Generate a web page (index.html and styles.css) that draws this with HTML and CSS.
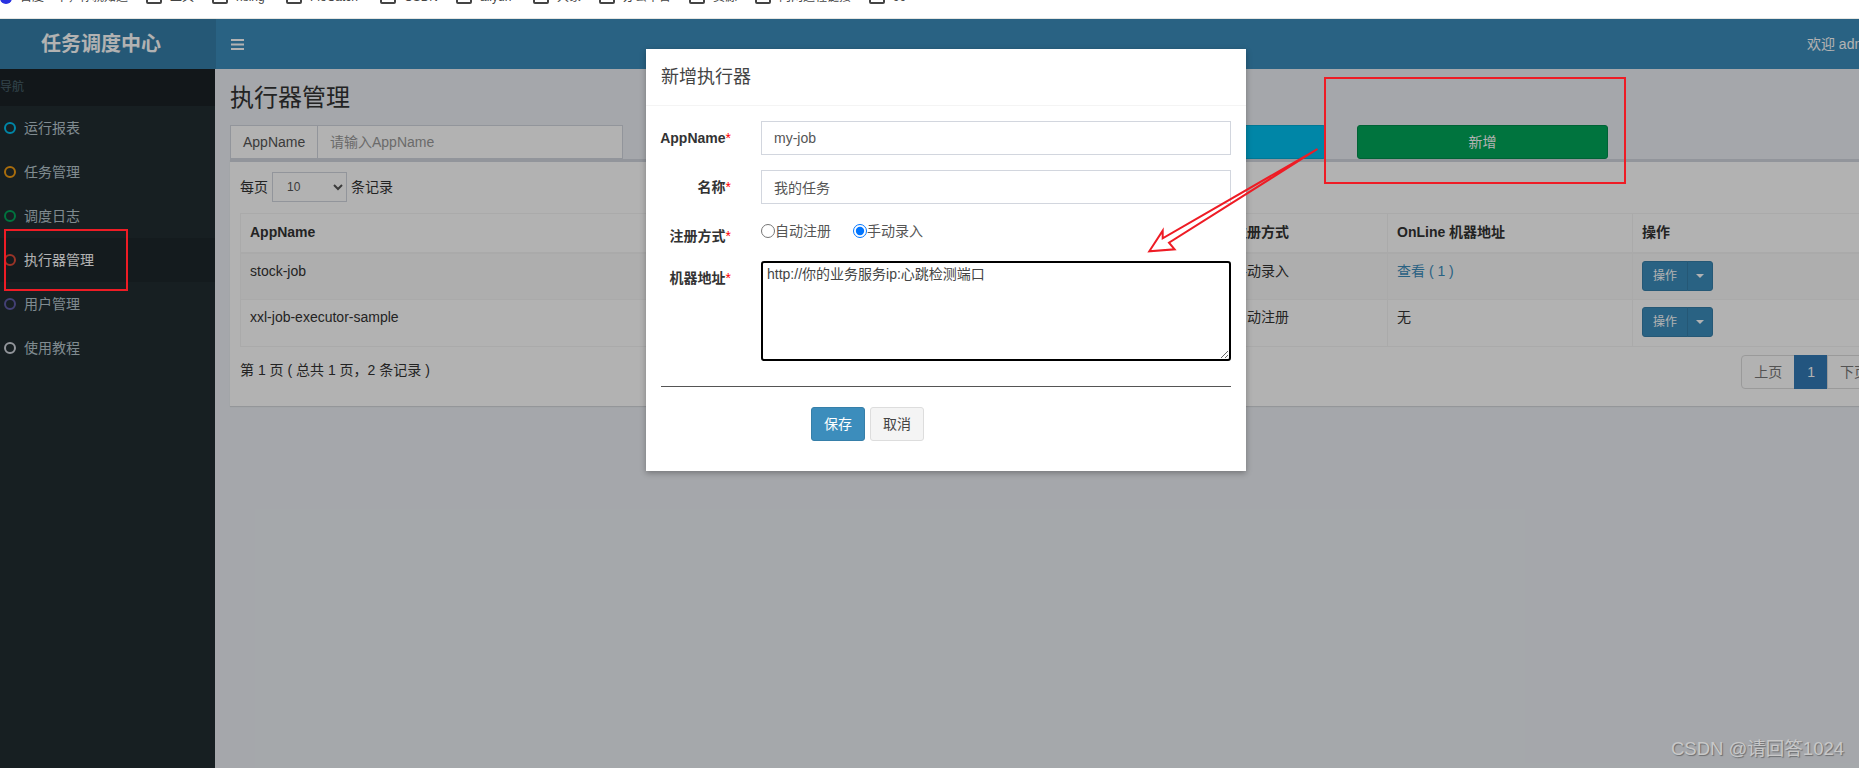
FILE: index.html
```html
<!DOCTYPE html>
<html lang="zh-CN">
<head>
  <meta charset="UTF-8" />
  <title>任务调度中心</title>
  <link rel="stylesheet" href="styles.css">
</head>
<body>
  <div class="bookmarks">
    <span class="bm"><i class="bm-baidu"></i>百度一下，你就知道</span>
    <span class="bm"><i class="bm-folder"></i>工具</span>
    <span class="bm"><i class="bm-folder"></i>rising</span>
    <span class="bm"><i class="bm-folder"></i>FioCatch</span>
    <span class="bm"><i class="bm-folder"></i>CSDN</span>
    <span class="bm"><i class="bm-folder"></i>aliyun</span>
    <span class="bm"><i class="bm-folder"></i>大象</span>
    <span class="bm"><i class="bm-folder"></i>办公平台</span>
    <span class="bm"><i class="bm-folder"></i>资源</span>
    <span class="bm"><i class="bm-folder"></i>内网远程链接</span>
    <span class="bm"><i class="bm-folder"></i>99</span>
  </div>

  <div class="app">
    <header class="topbar">
      <div class="logo">任务调度中心</div>
      <div class="navbar">
        <svg class="bars" width="13" height="11" viewBox="0 0 13 11"><path d="M0 0h13v2H0zM0 4.5h13v2H0zM0 9h13v2H0z" fill="#fff"/></svg>
        <span class="welcome">欢迎 admin</span>
      </div>
    </header>

    <div class="main">
      <aside class="sidebar">
        <div class="nav-head">导航</div>
        <ul class="menu">
          <li><i class="dot dot-aqua"></i>运行报表</li>
          <li><i class="dot dot-yellow"></i>任务管理</li>
          <li><i class="dot dot-green"></i>调度日志</li>
          <li class="active"><i class="dot dot-red"></i>执行器管理</li>
          <li><i class="dot dot-purple"></i>用户管理</li>
          <li><i class="dot dot-gray"></i>使用教程</li>
        </ul>
      </aside>

      <section class="content">
        <h1>执行器管理</h1>
        <div class="filters">
          <div class="input-group">
            <span class="addon">AppName</span>
            <input type="text" placeholder="请输入AppName" />
          </div>
          <button class="btn-wide btn-info">搜索</button>
          <button class="btn-wide btn-success">新增</button>
        </div>

        <div class="box">
          <div class="length">每页
            <select><option>10</option><option>25</option><option>50</option></select>
            条记录
          </div>
          <table>
            <colgroup>
              <col class="c-app"><col class="c-name"><col class="c-type"><col class="c-online"><col class="c-op">
            </colgroup>
            <thead>
              <tr><th>AppName</th><th>名称</th><th>注册方式</th><th>OnLine 机器地址</th><th>操作</th></tr>
            </thead>
            <tbody>
              <tr class="odd">
                <td>stock-job</td><td>股票任务</td><td>手动录入</td><td><a href="#">查看 ( 1 )</a></td>
                <td><span class="split"><b>操作</b><b class="caret-part"><i class="caret"></i></b></span></td>
              </tr>
              <tr>
                <td>xxl-job-executor-sample</td><td>示例执行器</td><td>自动注册</td><td>无</td>
                <td><span class="split"><b>操作</b><b class="caret-part"><i class="caret"></i></b></span></td>
              </tr>
            </tbody>
          </table>
          <div class="table-foot">
            <span>第 1 页 ( 总共 1 页，2 条记录 )</span>
            <div class="pager"><a>上页</a><a class="on">1</a><a>下页</a></div>
          </div>
        </div>
      </section>
    </div>
  </div>

  <div class="backdrop"></div>

  <div class="modal">
    <div class="modal-head">新增执行器</div>
    <form class="modal-body">
      <label>AppName<em>*</em></label>
      <input type="text" value="my-job" />
      <label>名称<em>*</em></label>
      <input type="text" value="我的任务" />
      <label>注册方式<em>*</em></label>
      <div class="radios">
        <span class="radio"><input type="radio" name="addressType" />自动注册</span>
        <span class="radio"><input type="radio" name="addressType" checked />手动录入</span>
      </div>
      <label>机器地址<em>*</em></label>
      <textarea>http://你的业务服务ip:心跳检测端口</textarea>
      <hr />
      <div class="actions">
        <button type="button" class="btn-save">保存</button>
        <button type="button" class="btn-cancel">取消</button>
      </div>
    </form>
  </div>

  <!-- annotations drawn on top of the screenshot -->
  <div class="mark mark-menu"></div>
  <div class="mark mark-add"></div>
  <svg class="arrow" width="1859" height="768" viewBox="0 0 1859 768">
    <path d="M1317.5 149 L1162.7 238.3 L1162.7 230.7 L1149.3 251.3 L1174.6 249.3 L1169 242.7 Z" fill="none" stroke="#ee1c25" stroke-width="2" />
  </svg>
  <div class="watermark">CSDN @请回答1024</div>
</body>
</html>
```

FILE: styles.css
```css
* { box-sizing: border-box; margin: 0; padding: 0; }
html, body { height: 100%; overflow: hidden; }
body { background: #ecf0f5; color: #333; font-family: "Liberation Sans", "Noto Sans CJK SC", sans-serif; font-size: 14px; line-height: 20px; position: relative; }

/* browser bookmarks bar, cut off at the top of the shot */
.bookmarks { display: grid; grid-template-columns: 146px 66px 74px 94px 76px 77px 66px 90px 66px 114px auto; height: 19px; background: #fff; border-bottom: 1px solid #e6e6e2; overflow: hidden; font-size: 12px; color: #444; }
.bm { display: flex; gap: 8px; height: 16px; margin-top: -11px; line-height: 16px; white-space: nowrap; }
.bm-folder { width: 16px; height: 15px; border: 2px solid #444; border-radius: 2px; background: #fff; }
.bm-baidu { width: 12px; height: 15px; border-radius: 6px; background: #2932e1; }

.app { width: 1891px; }
.topbar { display: flex; height: 50px; color: #fff; }
.logo { width: 216px; padding-left: 41px; background: #367fa9; font-size: 20px; font-weight: bold; line-height: 50px; }
.navbar { flex: 1; display: flex; align-items: center; justify-content: space-between; padding: 0 14px 0 15px; background: #3c8dbc; }

.main { display: flex; height: 699px; }
.sidebar { width: 216px; background: #222d32; }
.nav-head { height: 37px; padding-top: 8px; background: #1a2226; color: #4b646f; font-size: 12px; }
.menu { list-style: none; }
.menu li { display: flex; align-items: center; height: 44px; padding-left: 4px; color: #b8c7ce; }
.menu li.active { background: #1e282c; color: #fff; }
.dot { width: 12px; height: 12px; margin-right: 8px; border: 2.5px solid; border-radius: 50%; }
.dot-aqua { color: #00c0ef; }
.dot-yellow { color: #f39c12; }
.dot-green { color: #00a65a; }
.dot-red { color: #dd4b39; }
.dot-purple { color: #605ca8; }
.dot-gray { color: #d2d6de; }

.content { flex: 1; padding-left: 15px; }
h1 { height: 56px; padding-top: 14px; font-size: 24px; font-weight: normal; line-height: 30px; }
.filters { display: flex; height: 34px; }
.input-group { display: flex; width: 393px; }
.addon { width: 88px; padding: 6px 12px; background: #fff; border: 1px solid #d2d6de; color: #555; }
.input-group input { flex: 1; padding: 6px 12px; border: 1px solid #d2d6de; border-left: 0; font: inherit; }
.input-group input::placeholder { color: #999; }
.btn-wide { width: 251px; border: 1px solid; border-radius: 3px; color: #fff; font: inherit; }
.btn-info { margin-left: 452px; background: #00c0ef; border-color: #00acd6; }
.btn-success { margin-left: 31px; background: #00a65a; border-color: #008d4c; }

.box { height: 247px; padding: 10px; background: #fff; border-top: 3px solid #d2d6de; box-shadow: 0 1px 1px rgba(0,0,0,.1); }
.length { display: flex; align-items: center; gap: 4px; height: 30px; }
.length select { width: 75px; height: 30px; padding: 5px 10px; border: 1px solid #d2d6de; background: #fff; font-family: inherit; font-size: 12px; color: #555; }
table { table-layout: fixed; width: 1640px; margin-top: 11px; border-collapse: collapse; }
.c-app { width: 560px; }
.c-name { width: 423px; }
.c-type { width: 164px; }
.c-online { width: 245px; }
.c-op { width: 248px; }
th, td { padding: 8px 8px 8px 9px; border: 1px solid #f4f4f4; text-align: left; vertical-align: top; }
th { border-bottom-width: 2px; height: 39px; }
td { height: 47px; padding-top: 7px; }
tr.odd td { background: #f9f9f9; }
td a { color: #3c8dbc; text-decoration: none; }
.split { display: inline-flex; height: 30px; font-size: 12px; color: #fff; }
.split b { display: flex; align-items: center; padding: 0 10px; font-weight: normal; background: #3c8dbc; border: 1px solid #367fa9; border-radius: 3px 0 0 3px; }
.split .caret-part { padding: 0 8px; margin-left: -1px; border-radius: 0 3px 3px 0; }
.caret { border-top: 4px solid #fff; border-left: 4px solid transparent; border-right: 4px solid transparent; }
.table-foot { display: flex; justify-content: space-between; align-items: flex-start; margin-top: 8px; }
.table-foot span { padding-top: 5px; }
.pager { display: flex; height: 34px; }
.pager a { padding: 6px 12px; margin-left: -1px; background: #fff; border: 1px solid #ddd; color: #777; }
.pager a:first-child { border-radius: 4px 0 0 4px; margin-left: 0; }
.pager a.on { background: #337ab7; border-color: #337ab7; color: #fff; }

/* modal layer */
.backdrop { position: absolute; inset: 19px 0 0 0; background: rgba(0,0,0,.3); }
.modal { position: absolute; left: 646px; top: 49px; width: 600px; height: 422px; background: #fff; box-shadow: 0 2px 6px rgba(0,0,0,.3); }
.modal-head { height: 57px; padding: 15px; border-bottom: 1px solid #f4f4f4; font-size: 18px; line-height: 26px; color: #444; }
.modal-body { display: grid; grid-template-columns: 70px 470px; column-gap: 30px; padding: 15px; }
.modal-body label { display: flex; justify-content: flex-end; padding-top: 7px; font-weight: bold; white-space: nowrap; }
.modal-body em { color: #f00; font-style: normal; font-weight: normal; }
.modal-body > input { height: 34px; margin-bottom: 15px; padding: 6px 12px; border: 1px solid #d2d6de; color: #555; font: inherit; }
.radios { display: flex; gap: 22px; height: 27px; margin-bottom: 15px; padding-top: 2px; color: #555; }
.radio { display: flex; align-items: center; height: 20px; }
.radio input { width: 14px; height: 14px; margin: 0; }
textarea { height: 100px; padding: 2px 4px; border: 2px solid #000; border-radius: 3px; outline: 0; font-family: inherit; font-size: 14px; line-height: 18px; color: #444; }
hr { grid-column: 1 / 3; height: 1px; margin: 25px 0 20px; border: 0; background: #555; }
.actions { grid-column: 1 / 3; display: flex; gap: 5px; padding-left: 150px; }
.actions button { width: 54px; height: 34px; border: 1px solid; border-radius: 3px; font: inherit; }
.actions .btn-save { background: #3c8dbc; border-color: #367fa9; color: #fff; }
.actions .btn-cancel { background: #f4f4f4; border-color: #ddd; color: #444; }

/* red annotation marks */
.mark { position: absolute; border: 2px solid #ee1c25; }
.mark-menu { left: 4px; top: 229px; width: 124px; height: 62px; }
.mark-add { left: 1324px; top: 77px; width: 302px; height: 107px; }
.arrow { position: absolute; left: 0; top: 0; }
.watermark { position: absolute; left: 1671px; top: 738px; color: #c8c8c8; font-size: 18.5px; line-height: 22px; text-shadow: 1px 1px 1px rgba(0,0,0,.35); }
```
